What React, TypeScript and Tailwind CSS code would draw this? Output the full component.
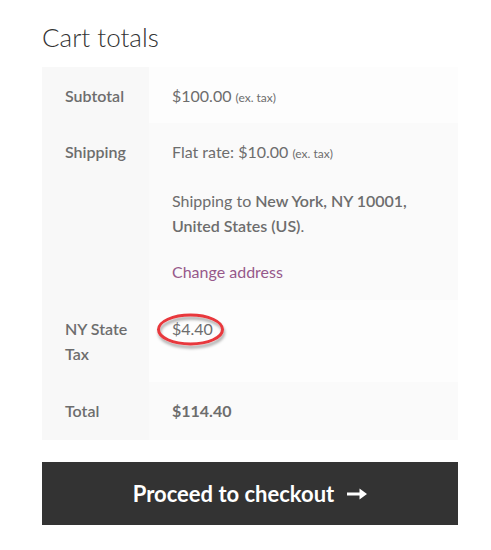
import type { ReactNode } from 'react'

const font = { fontFamily: 'Lato, "Noto Sans", sans-serif' }

function Row({ label, children, even, h }: { label: ReactNode; children: ReactNode; even?: boolean; h: string }) {
  return (
    <div className={`flex ${h}`}>
      <div className="w-[107px] shrink-0 bg-[#f8f8f8] pl-[23px] pr-2 py-4 font-semibold text-[#6d6d6d] leading-[25px]">
        {label}
      </div>
      <div
        className={[
          'relative flex-1 pl-[23px] pr-4 py-4 text-[#6d6d6d] leading-[25px]',
          even ? 'bg-[#fafafa]' : 'bg-[#fdfdfd]',
        ].join(' ')}
      >
        {children}
      </div>
    </div>
  )
}

export default function App() {
  return (
    <main className="min-h-screen bg-white pt-[20px] pl-[42px] pr-[33px] text-[16px]" style={font}>
      <h2 className="text-[26px] font-light text-[#333] leading-[34px] mb-[13px]">Cart totals</h2>

      <div className="flex flex-col">
        <Row label="Subtotal" h="h-[56px]">
          $100.00 <small className="text-[12px]">(ex. tax)</small>
        </Row>
        <Row label="Shipping" even h="h-[177px]">
          <p>
            Flat rate: $10.00 <small className="text-[12px]">(ex. tax)</small>
          </p>
          <p className="mt-[22px]">
            Shipping to <strong className="font-semibold">New York, NY 10001, United States (US)</strong>.
          </p>
          <p className="mt-[21px] text-[#96588a]">Change address</p>
        </Row>
        <Row label={<>NY State<br />Tax</>} h="h-[82px]">
          $4.40
          {/* red annotation ring */}
          <svg className="absolute left-[2px] top-[8px] overflow-visible" width="80" height="44" viewBox="0 0 80 44">
            <defs>
              <filter id="ringShadow" x="-20%" y="-30%" width="140%" height="170%">
                <feDropShadow dx="1" dy="3" stdDeviation="1.6" floodColor="#000" floodOpacity="0.35" />
              </filter>
            </defs>
            <ellipse
              cx="39.5"
              cy="21.5"
              rx="32"
              ry="14.5"
              fill="none"
              stroke="#e8383d"
              strokeWidth="3"
              filter="url(#ringShadow)"
            />
          </svg>
        </Row>
        <Row label="Total" even h="h-[58px]">
          <strong className="font-bold">$114.40</strong>
        </Row>
      </div>

      <button className="mt-[22px] w-full h-[63px] bg-[#333333] text-white text-[22px] font-bold flex items-center justify-center gap-[13px]">
        Proceed to checkout
        <svg width="20" height="12" viewBox="0 0 20 12" className="mt-[1px]">
          <path d="M0 4.4h12.5V0.5L20 6l-7.5 5.5V7.6H0z" fill="white" />
        </svg>
      </button>
    </main>
  )
}
